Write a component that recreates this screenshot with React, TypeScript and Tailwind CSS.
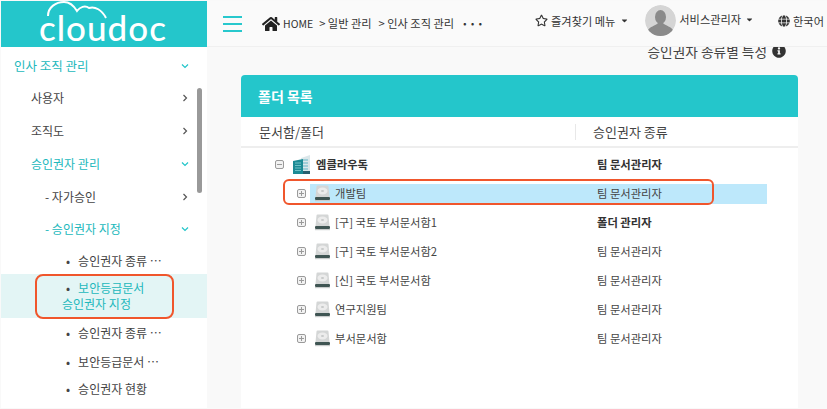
import React from "react";
import { FaHome, FaRegStar, FaGlobe, FaInfoCircle, FaCaretDown } from "react-icons/fa";

const font = { fontFamily: '"Noto Sans CJK KR", "Noto Sans", sans-serif' };

function Chev({ open, teal }: { open?: boolean; teal?: boolean }) {
  return (
    <svg width="8" height="8" viewBox="0 0 8 8" fill="none" stroke={teal ? "#22c5c9" : "#555"} strokeWidth="1.2" className="shrink-0">
      {open ? <path d="M1 2.5 L4 5.5 L7 2.5" /> : <path d="M2.5 1 L5.5 4 L2.5 7" />}
    </svg>
  );
}

function SideRow({ label, h, pl, teal, open, chev, size }: { label: string; h: string; pl: string; teal?: boolean; open?: boolean; chev?: boolean; size?: string }) {
  return (
    <div className={`flex items-center justify-between pr-[18px] ${h} ${pl} ${size ?? ""} ${teal ? "text-[#22b8bc]" : "text-[#444]"}`}>
      <span className="whitespace-nowrap">{label}</span>
      {chev && <Chev open={open} teal={teal} />}
    </div>
  );
}

function Disk() {
  return (
    <svg width="17" height="17" viewBox="0 0 17 17" className="shrink-0">
      <path d="M2.5 1.500 Q2.500 0.500 3.500 0.500 H13.500 Q14.500 0.500 14.500 1.500 L15.500 12 H1.500 Z" fill="#d4d6d6" />
      <ellipse cx="8.500" cy="6" rx="5" ry="3.400" fill="#ececec" />
      <ellipse cx="8.500" cy="6" rx="1.600" ry="1.100" fill="#c8caca" />
      <rect x="1" y="12" width="15" height="3" rx="1" fill="#3f5553" />
      <rect x="1" y="15" width="15" height="1.200" fill="#c9cccc" />
    </svg>
  );
}

function Building() {
  return (
    <svg width="18" height="20" viewBox="0 0 18 20" className="shrink-0">
      <path d="M8 3 L17 0 V19 H8 Z" fill="#dbe7ea" />
      <path d="M10 5h5M10 8h5M10 11h5M10 14h5" stroke="#8cc6d2" strokeWidth="1.400" />
      <path d="M0 6 L10 4 V19 H0 Z" fill="#1c8a94" />
      <path d="M2 8h6M2 10.500h6M2 13h6M2 15.500h6" stroke="#6cc0c6" strokeWidth="1" />
      <rect x="10" y="16" width="7" height="3" fill="#2a5f6e" />
    </svg>
  );
}

function Box({ minus }: { minus?: boolean }) {
  return (
    <svg width="9" height="9" viewBox="0 0 9 9" fill="none" stroke="#9a9a9a" strokeWidth="1" className="shrink-0">
      <rect x="0.500" y="0.500" width="8" height="8" rx="1.500" fill="#f2f2f2" />
      <path d={minus ? "M2 4.500 H7" : "M2 4.500 H7 M4.500 2 V7"} />
    </svg>
  );
}

function TreeRow({ name, role, boldRole, selected }: { name: string; role: string; boldRole?: boolean; selected?: boolean }) {
  return (
    <div className="flex items-center h-[29px]">
      <div className="w-[69px] pl-[56px] shrink-0 flex"><Box /></div>
      <div className={`flex items-center h-[20px] w-[457px] pl-[4px] gap-[4px] ${selected ? "bg-[#bde8fb]" : ""}`}>
        <Disk />
        <span className="w-[258px] whitespace-nowrap text-[#444]">{name}</span>
        <span className={`whitespace-nowrap ${boldRole ? "font-bold text-[#333]" : "text-[#444]"}`}>{role}</span>
      </div>
    </div>
  );
}

export default function App() {
  return (
    <div style={font} className="relative flex w-[827px] h-[409px] overflow-hidden bg-[#f9f9f9] text-[12px] pt-px pb-px pl-px">
      {/* Sidebar */}
      <aside className="w-[206px] shrink-0 bg-white flex flex-col relative">
        <div className="h-[46px] bg-[#24c6cb] overflow-hidden relative shrink-0">
          <svg width="62" height="20" viewBox="0 0 62 20" fill="none" stroke="#fff" strokeWidth="2" className="absolute left-[46px] top-0">
            <path d="M1 15 C1 6 9 1 17 1 C23 1 27 5 30 10 C33 6 38 4 42 7 C48 5 55 9 59 17" />
          </svg>
          <span className="absolute left-[38px] top-[6px] text-[35px] leading-[40px] font-medium text-white tracking-[1px]" style={{ fontFamily: "Lato, sans-serif" }}>cloudoc</span>
        </div>
        <div className="flex flex-col text-[12px] pt-[3px]">
          <SideRow label="인사 조직 관리" h="h-[32px]" pl="pl-[13px]" size="text-[12.500px]" teal open chev />
          <SideRow label="사용자" h="h-[32px]" pl="pl-[30px]" chev />
          <SideRow label="조직도" h="h-[33px]" pl="pl-[30px]" chev />
          <SideRow label="승인권자 관리" h="h-[33px]" pl="pl-[30px]" teal open chev />
          <SideRow label="- 자가승인" h="h-[33px]" pl="pl-[44px]" chev />
          <SideRow label="- 승인권자 지정" h="h-[32px]" pl="pl-[44px]" teal open chev />
          <div className="h-[29px] pt-[2px] flex items-center pl-[65px] text-[#444] whitespace-nowrap"><span className="mr-[8px]">•</span>승인권자 종류 ⋯</div>
          <div className="h-[44px] bg-[#e3f5f5] text-[#22b8bc] pl-[61px] flex flex-col justify-center leading-[16px]">
            <div className="pl-[4px] whitespace-nowrap"><span className="mr-[8px] text-[#444]">•</span>보안등급문서</div>
            <div className="whitespace-nowrap">승인권자 지정</div>
          </div>
          <div className="h-[30px] flex items-center pl-[65px] text-[#444] whitespace-nowrap"><span className="mr-[8px]">•</span>승인권자 종류 ⋯</div>
          <div className="h-[27px] flex items-center pl-[65px] text-[#444] whitespace-nowrap"><span className="mr-[8px]">•</span>보안등급문서 ⋯</div>
          <div className="h-[28px] flex items-center pl-[65px] text-[#444] whitespace-nowrap"><span className="mr-[8px]">•</span>승인권자 현황</div>
        </div>
        <div className="absolute left-[196px] top-[87px] w-[5px] h-[105px] rounded-full bg-[#999]" />
        <div className="absolute left-[34px] top-[273px] w-[139px] h-[45px] rounded-[8px] border-2 border-[#f0562c]" />
      </aside>

      {/* Right */}
      <div className="flex-1 min-w-0 flex flex-col">
        <header className="relative z-10 h-[46px] shrink-0 bg-[#fafafa] border-b border-[#f0f0f0] flex items-center text-[#333] text-[11.200px] overflow-hidden">
          <div className="ml-[16px] w-[19px] flex flex-col gap-[5px] shrink-0">
            <div className="h-[2px] bg-[#28c8cd]" />
            <div className="h-[2px] bg-[#28c8cd]" />
            <div className="h-[2px] bg-[#28c8cd]" />
          </div>
          <FaHome className="ml-[20px] text-[18px] text-[#222] shrink-0" />
          <span className="ml-[3px] whitespace-nowrap text-[10.500px]">HOME</span>
          <span className="ml-[6px] whitespace-nowrap">&gt; 일반 관리</span>
          <span className="ml-[7px] whitespace-nowrap">&gt; 인사 조직 관리</span>
          <span className="ml-[7px] w-[20px] text-[13px] font-bold leading-none whitespace-nowrap shrink-0">···</span>
          <div className="ml-[54px] mb-[5px] flex items-center shrink-0">
            <FaRegStar className="text-[13px] text-[#333] shrink-0" />
            <span className="ml-[3px] whitespace-nowrap">즐겨찾기 메뉴</span>
            <FaCaretDown className="ml-[5px] text-[9px] shrink-0" />
          </div>
          <svg width="31" height="31" viewBox="0 0 31 31" className="ml-[16px] mb-[6px] shrink-0 rounded-full">
            <circle cx="15.500" cy="15.500" r="15.500" fill="#d5d5d5" />
            <ellipse cx="15.500" cy="12" rx="5.500" ry="7" fill="#8a8a8a" />
            <path d="M2 27 C4 21 11 21 13 18 H18 C20 21 27 21 29 27 A15.500 15.500 0 0 1 2 27 Z" fill="#8a8a8a" />
          </svg>
          <div className="ml-[3px] mb-[8px] flex items-center shrink-0">
            <span className="whitespace-nowrap">서비스관리자</span>
            <FaCaretDown className="ml-[4px] text-[9px] shrink-0" />
          </div>
          <div className="ml-[24px] mb-[5px] flex items-center shrink-0">
            <FaGlobe className="text-[12px] shrink-0" />
            <span className="ml-[3px] whitespace-nowrap">한국어</span>
          </div>
        </header>

        <main className="flex-1 min-h-0 flex flex-col pl-[34px] pr-[29px] relative">
          <div className="absolute right-[41px] -top-[6px] flex items-center gap-[5px] text-[13.700px] text-[#444] whitespace-nowrap">
            승인권자 종류별 특성 <FaInfoCircle className="text-[14px] text-[#333]" />
          </div>
          <div className="mt-[28px] flex-1 bg-white rounded-t-[4px] flex flex-col overflow-hidden">
            <div className="h-[42px] shrink-0 bg-[#24c6cb] flex items-center pl-[17px] text-white font-bold text-[14px]">폴더 목록</div>
            <div className="h-[31px] shrink-0 pt-px flex items-center border-b-2 border-[#eeeeee] text-[#444] text-[13px]">
              <div className="w-[335px] pl-[18px] h-[16px] flex items-center border-r border-[#e8e8e8]">문서함/폴더</div>
              <div className="pl-[17px]">승인권자 종류</div>
            </div>
            <div className="pt-[2px] text-[11.300px]">
              <div className="flex items-center h-[29px]">
                <div className="w-[43px] pl-[34px] shrink-0 flex"><Box minus /></div>
                <div className="ml-[9px] shrink-0"><Building /></div>
                <span className="ml-[5px] w-[281px] font-bold text-[#333] whitespace-nowrap">엠클라우독</span>
                <span className="font-bold text-[#333] whitespace-nowrap">팀 문서관리자</span>
              </div>
              <TreeRow name="개발팀" role="팀 문서관리자" selected />
              <TreeRow name="[구] 국토 부서문서함1" role="폴더 관리자" boldRole />
              <TreeRow name="[구] 국토 부서문서함2" role="팀 문서관리자" />
              <TreeRow name="[신] 국토 부서문서함" role="팀 문서관리자" />
              <TreeRow name="연구지원팀" role="팀 문서관리자" />
              <TreeRow name="부서문서함" role="팀 문서관리자" />
            </div>
          </div>
          <div className="absolute left-[76px] top-[132px] w-[431px] h-[26px] rounded-[6px] border-2 border-[#f0562c]" />
        </main>
      </div>
    </div>
  );
}
